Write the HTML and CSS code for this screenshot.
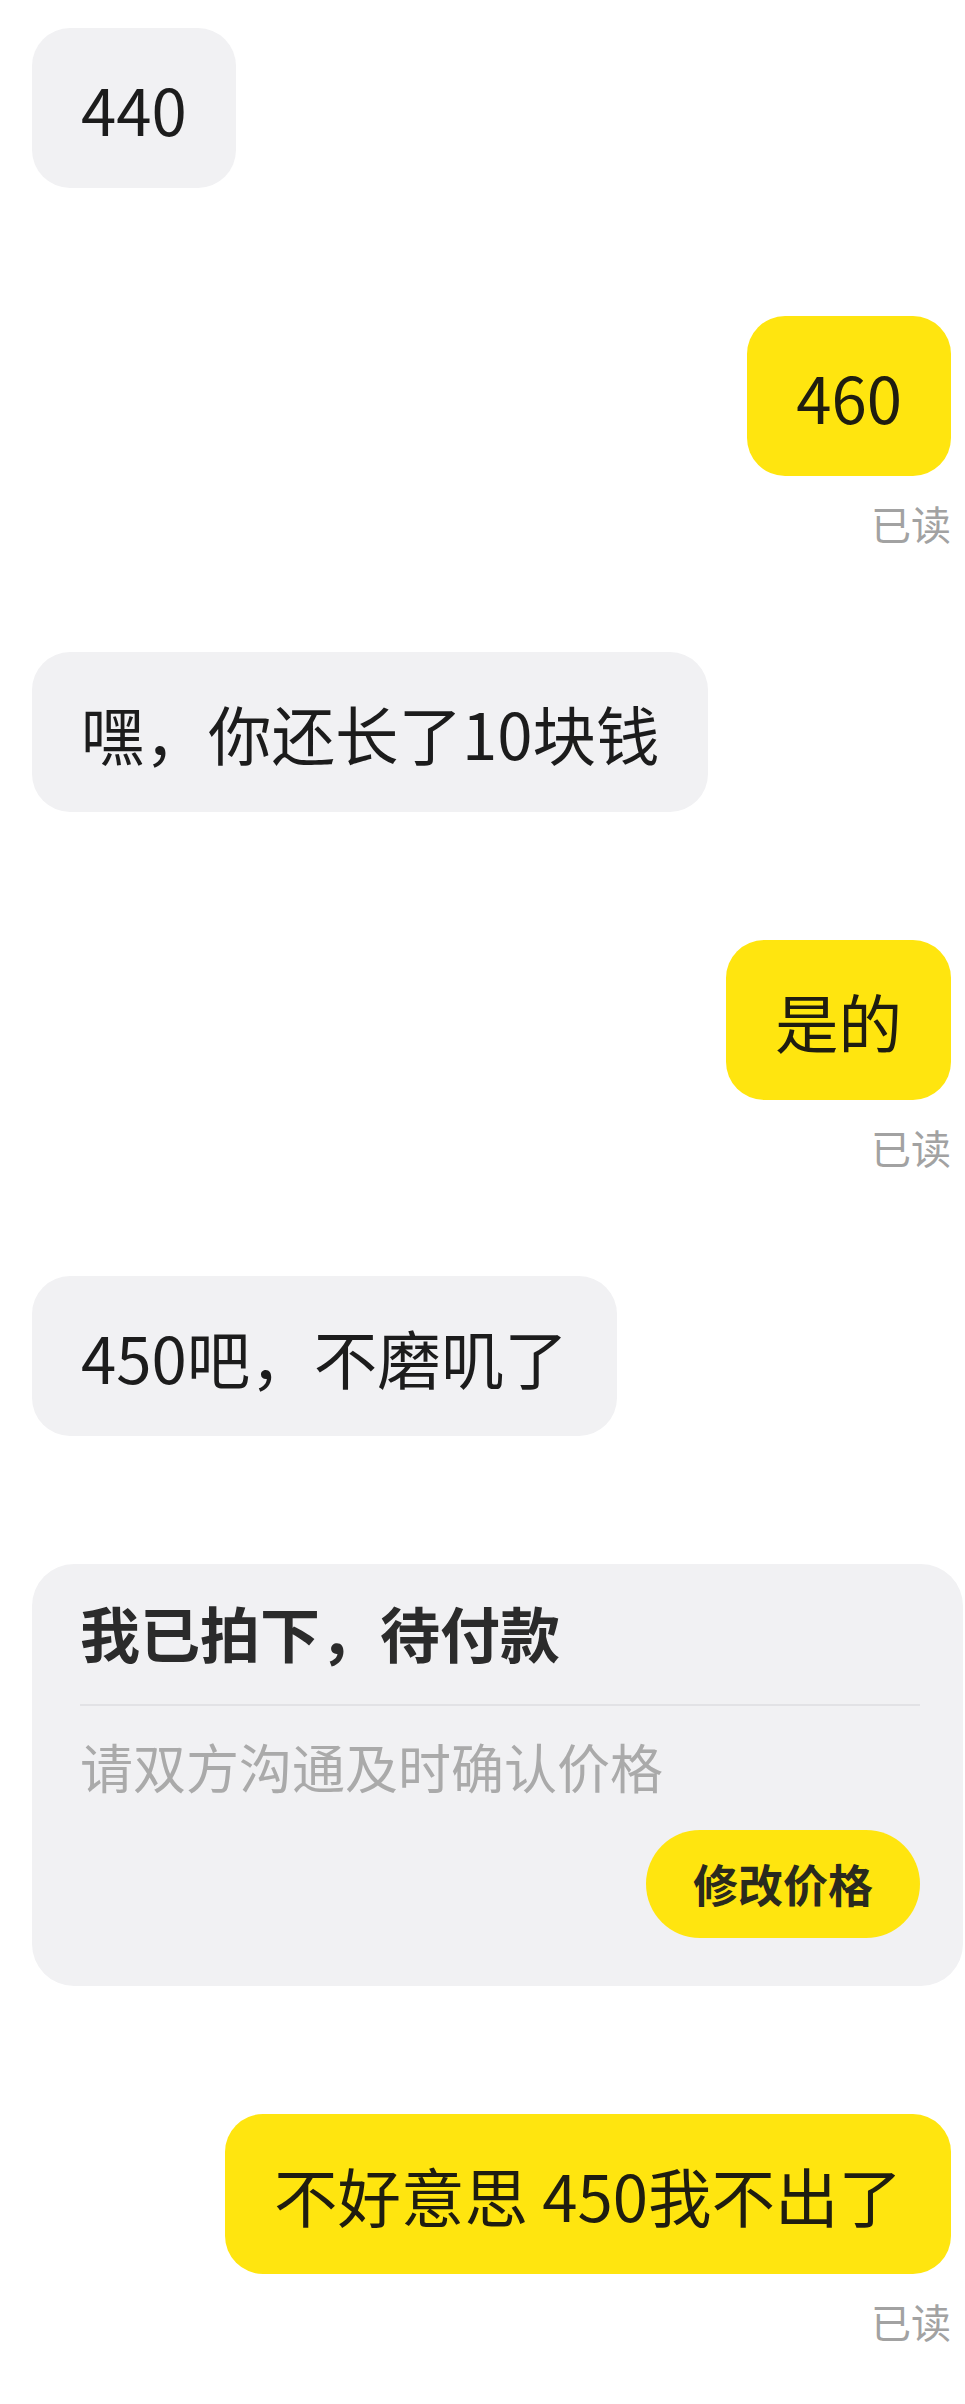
FILE: index.html
```html
<!DOCTYPE html>
<html lang="zh-CN">
<head>
<meta charset="utf-8">
<title>聊天</title>
<link rel="stylesheet" href="styles.css">
</head>
<body>
<div class="chat">
  <div class="msg in"><div class="bubble">440</div></div>
  <div class="msg out"><div class="bubble">460</div><div class="read">已读</div></div>
  <div class="msg in"><div class="bubble">嘿，你还长了10块钱</div></div>
  <div class="msg out"><div class="bubble">是的</div><div class="read">已读</div></div>
  <div class="msg in"><div class="bubble">450吧，不磨叽了</div></div>
  <div class="msg in card-row">
    <div class="card">
      <div class="card-title">我已拍下，待付款</div>
      <div class="card-divider"></div>
      <div class="card-sub">请双方沟通及时确认价格</div>
      <div class="card-actions"><button class="card-btn">修改价格</button></div>
    </div>
  </div>
  <div class="msg out"><div class="bubble">不好意思 450我不出了</div><div class="read">已读</div></div>
</div>
</body>
</html>
```

FILE: styles.css
```css
html, body {
  margin: 0;
  padding: 0;
  background: #ffffff;
}
body {
  font-family: "Noto Sans CJK SC", "Noto Sans", sans-serif;
  color: #1c1c1c;
  overflow: hidden;
}
.chat {
  display: flex;
  flex-direction: column;
  gap: 128px;
  padding: 28px 14px 60px 32px;
}
.msg {
  display: flex;
  flex-direction: column;
  align-items: flex-start;
}
.msg.out {
  align-items: flex-end;
}
.bubble {
  font-size: 63.5px;
  line-height: 88px;
  padding: 36px 49px;
  border-radius: 38px;
  background: #f1f1f3;
  white-space: nowrap;
}
.msg.out .bubble {
  background: #ffe50f;
  color: #1f1d10;
}
.read {
  font-size: 40px;
  line-height: 48px;
  color: #a2a2a2;
  margin-top: 23px;
  margin-bottom: -23px;
}
.card-row {
  align-items: stretch;
  margin-right: -12px;
}
.card {
  background: #f1f1f3;
  border-radius: 42px;
  padding: 32px 43px 48px 48px;
  display: flex;
  flex-direction: column;
}
.card-title {
  font-size: 60px;
  font-weight: 700;
  line-height: 72px;
  color: #2b2b2b;
}
.card-divider {
  height: 2px;
  background: #e2e2e5;
  margin-top: 36px;
}
.card-sub {
  font-size: 53px;
  line-height: 70px;
  color: #aaaaaa;
  margin-top: 25px;
}
.card-actions {
  display: flex;
  justify-content: flex-end;
  margin-top: 29px;
}
.card-btn {
  font-family: inherit;
  font-size: 45px;
  font-weight: 700;
  line-height: 60px;
  color: #2a2a1e;
  background: #ffe50f;
  border: none;
  border-radius: 54px;
  height: 108px;
  padding: 0 47px;
}
```
